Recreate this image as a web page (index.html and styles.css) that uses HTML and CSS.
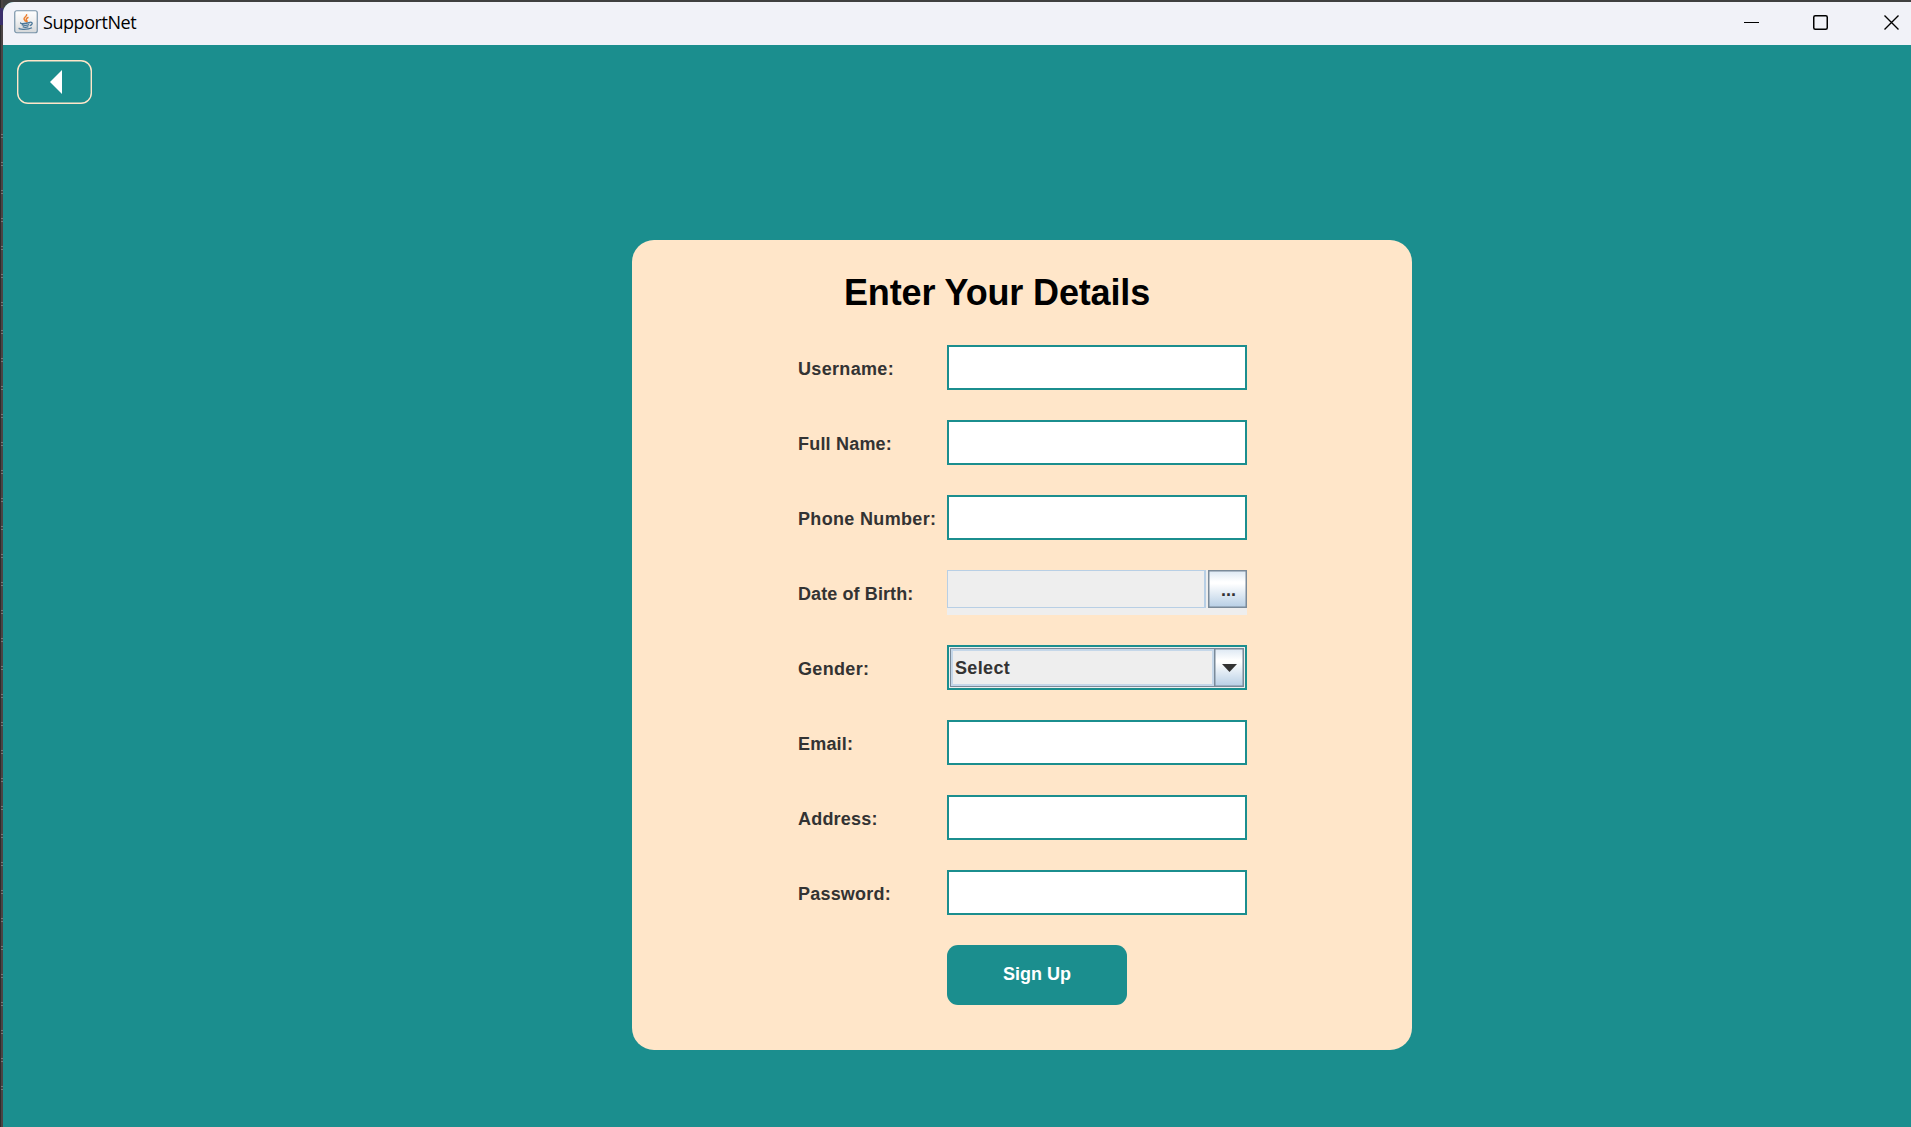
FILE: index.html
```html
<!DOCTYPE html>
<html lang="en">
<head>
<meta charset="utf-8">
<title>SupportNet</title>
<link rel="stylesheet" href="styles.css">
</head>
<body>
<div class="window">
  <header class="titlebar">
    <svg class="app-icon" width="24" height="24" viewBox="0 0 24 24">
      <defs><linearGradient id="tile" x1="0" y1="0" x2="0" y2="1"><stop offset="0" stop-color="#fff"/><stop offset=".45" stop-color="#f1f1f1"/><stop offset="1" stop-color="#d4d7d9"/></linearGradient></defs>
      <rect x=".75" y=".75" width="22.5" height="22" rx="2" fill="url(#tile)" stroke="#7893a8" stroke-width="1.2"/>
      <path d="M12.500 4.200c1.300 2-3.200 3-2.400 5 .4 1 1.200 1.400 1.600 2.600M14.500 7.300c-2.800 1.200-2.600 2.100-1.600 3.400.4.600.1 1.200-.5 1.600" fill="none" stroke="#ec8030" stroke-width="1.500"/>
      <path d="M7 12.600c-2 1.300 4 1.300 9-.1M7.800 14.600c1.500 1 5.500.8 7.400 0M8.700 16.600c1.400.8 4 .7 5.700 0M16 12.300c3.200-.6 2.800 2.500-.2 3.300M5.500 18c-2.500 1.500 8 2.200 12.500-.2" fill="none" stroke="#4d789a" stroke-width="1.300"/>
    </svg>
    <span class="app-name">SupportNet</span>
    <div class="controls">
      <svg width="16" height="16" viewBox="0 0 16 16"><path d="M0 7.500h15" stroke="#000"/></svg>
      <svg width="16" height="16" viewBox="0 0 16 16"><rect x=".75" y=".75" width="13.500" height="13.500" rx="1.500" fill="none" stroke="#000" stroke-width="1.500"/></svg>
      <svg width="16" height="16" viewBox="0 0 16 16"><path d="M.5.500l14 14M14.500.5l-14 14" stroke="#000" stroke-width="1.400"/></svg>
    </div>
  </header>
  <main class="content">
    <button class="back" aria-label="Back"><svg width="12" height="24" viewBox="0 0 12 24"><path d="M12 0v24L0 12z" fill="#fff"/></svg></button>
    <form class="card">
      <h1 class="title">Enter Your Details</h1>
      <div class="fields">
        <label class="label wide" for="username">Username:</label><input class="field" id="username">
        <label class="label" for="fullname">Full Name:</label><input class="field" id="fullname">
        <label class="label wide" for="phone">Phone Number:</label><input class="field" id="phone">
        <span class="label tight">Date of Birth:</span>
        <div class="date"><div class="date-value"></div><button class="date-button" type="button">...</button></div>
        <span class="label wide">Gender:</span>
        <div class="combo"><span class="combo-value">Select</span><span class="combo-arrow"><svg width="15" height="8" viewBox="0 0 15 8"><path d="M0 0h15L7.500 8z" fill="#333"/></svg></span></div>
        <label class="label" for="email">Email:</label><input class="field" id="email">
        <label class="label" for="address">Address:</label><input class="field" id="address">
        <label class="label" for="password">Password:</label><input class="field" id="password" type="password">
        <button class="submit" type="button">Sign Up</button>
      </div>
    </form>
  </main>
</div>
</body>
</html>
```
FILE: styles.css
```css
* { box-sizing: border-box; }
body {
  margin: 0;
  height: 1127px;
  padding: 2px 0 0 3px;
  overflow: hidden;
  background:
    linear-gradient(#3a2f6b, #3a2f6b) 0 8px / 3px 17px no-repeat,
    repeating-linear-gradient(transparent 0 24px, #777 24px 25px, transparent 25px 27px, #777 27px 28px) 1px 110px / 2px 990px no-repeat,
    linear-gradient(90deg, #2c2c2c 1px, #4b4444 1px 3px, #404040 3px);
  font-family: "Liberation Sans", Arial, sans-serif;
}
button { font-family: inherit; padding: 0; }
svg { display: block; }
.window { height: 1125px; border-top-left-radius: 11px; overflow: hidden; background: #1b8e8e; }
.titlebar { display: flex; height: 43px; padding: 0 11px 0 11px; background: #f1f2f8; }
.app-icon { margin-top: 8px; }
.app-name {
  margin-left: 5px;
  padding-top: 7px;
  font: 18px/26px "Open Sans", "Noto Sans", sans-serif;
  letter-spacing: -0.450px;
  color: #000;
}
.controls { display: flex; gap: 53px; margin-left: auto; padding-top: 13px; }
.controls svg:last-child { margin-left: 2px; }
.content { padding: 15px 0 0 14px; }
.back {
  display: flex;
  align-items: center;
  width: 75px;
  height: 44px;
  padding-left: 33px;
  border: 0;
  border-radius: 11px;
  box-shadow: inset 0 0 0 1.400px #ffe6c9;
  background: #1b8e8e;
}
.card {
  width: 780px;
  height: 810px;
  margin: 136px 0 0 615px;
  padding: 32px 0 0 166px;
  border-radius: 22px;
  background: #ffe6c9;
}
.title { margin: 0 0 32px 46px; font-size: 36px; line-height: 41px; letter-spacing: -0.150px; color: #000; }
.fields { display: grid; grid-template-columns: 149px 300px; grid-auto-rows: 45px; row-gap: 30px; }
.label { align-self: center; padding-top: 4px; font-size: 18px; font-weight: bold; letter-spacing: 0.200px; color: #333; white-space: nowrap; }
.wide { letter-spacing: 0.330px; }
.tight { letter-spacing: 0.100px; }
.field { width: 300px; height: 45px; border: 2px solid #1b8e8e; background: #fff; outline: 0; }
.date { display: flex; justify-content: space-between; height: 45px; padding-bottom: 7px; background: #eee; }
.date-value { width: 259px; border: 1px solid #b8cfe5; border-right-width: 2px; }
.date-button {
  width: 39px;
  padding: 2px 0 0 2px;
  border: 1px solid #7a8a99;
  box-shadow: inset 0 0 0 0.500px #7a8a99;
  background: linear-gradient(#dde8f3, #fff 30%, #fff 35%, #b8cfe5);
  font-size: 18px;
  font-weight: bold;
  color: #333;
}
.combo { display: flex; height: 45px; padding: 1px; border: 2px solid #1b8e8e; background: #eee; }
.combo-value {
  flex: 1;
  padding: 0 0 0 4px;
  border: 1px solid #7a8a99;
  border-right: 0;
  box-shadow: inset 0 0 0 2px #c5d7e9;
  font-size: 18px;
  font-weight: bold;
  letter-spacing: 0.350px;
  line-height: 38px;
  color: #333;
}
.combo-arrow {
  display: flex;
  align-items: center;
  justify-content: center;
  width: 30px;
  border: 1px solid #7a8a99;
  box-shadow: inset 0 0 0 0.500px #7a8a99;
  background: linear-gradient(#dde8f3, #fff 30%, #fff 35%, #b8cfe5);
}
.submit {
  grid-column: 2;
  width: 180px;
  height: 60px;
  padding-bottom: 1px;
  border: 0;
  border-radius: 11px;
  background: #1b8e8e;
  font-size: 18px;
  font-weight: bold;
  color: #fff;
}
```
